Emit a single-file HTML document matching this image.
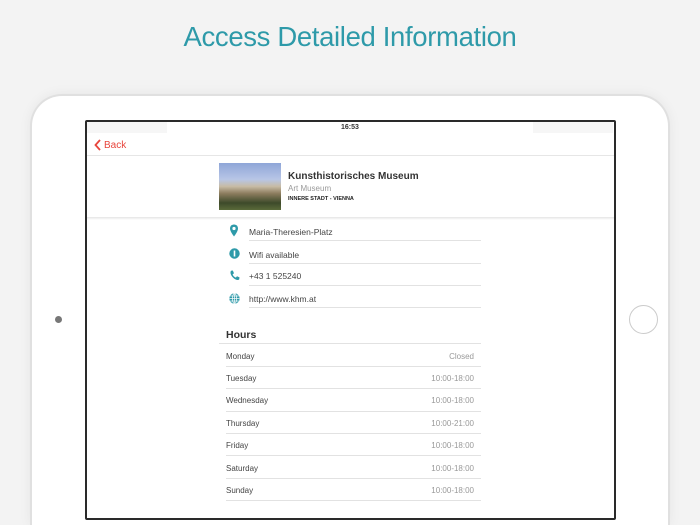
<!DOCTYPE html>
<html><head><meta charset="utf-8"><style>
*{margin:0;padding:0;box-sizing:border-box}
html{width:700px;height:525px;overflow:hidden}
body{width:700px;height:525px;overflow:hidden;background:#f3f3f3;font-family:"Liberation Sans",sans-serif;position:relative}
.title{position:absolute;top:21px;left:0;width:700px;text-align:center;font-size:27.5px;color:#2e9aa9;letter-spacing:-0.35px}
.dev{position:absolute;left:30px;top:94px;width:640px;height:431px;background:#fff;border:2px solid #e0e0e0;border-bottom:none;border-radius:32px 32px 0 0;box-shadow:0 0 12px rgba(0,0,0,0.06)}
.cam{position:absolute;left:55px;top:316px;width:7px;height:7px;border-radius:50%;background:#777}
.home{position:absolute;left:629px;top:305px;width:29px;height:29px;border-radius:50%;border:1.5px solid #ccc;background:#fff}
.scr{position:absolute;left:85px;top:120px;width:531px;height:400px;border:2.5px solid #2a2a2a;border-radius:2px;background:#fff;overflow:hidden}
.abs{position:absolute}
.t{position:absolute;font-size:8.5px;color:#444}
.line{position:absolute;height:1px;background:#e2e2e2}
.r{position:absolute;font-size:8px;color:#999;text-align:right;width:80px}
</style></head><body>
<div class="title">Access Detailed Information</div>
<div class="dev"></div>
<div class="cam"></div>
<div class="home"></div>
<div class="scr">
 <div class="abs" style="left:0;top:0;width:80px;height:11px;background:#f6f6f6"></div>
 <div class="abs" style="left:446px;top:0;width:80px;height:11px;background:#f6f6f6"></div>
 <div class="t" style="left:254px;top:2px;font-size:7px;font-weight:bold;color:#333">16:53</div>
 <svg class="abs" style="left:7px;top:17px" width="8" height="12" viewBox="0 0 8 12"><path d="M6 1 L1.5 6 L6 11" stroke="#e8453c" stroke-width="1.8" fill="none"/></svg>
 <div class="t" style="left:17px;top:18px;font-size:10px;color:#e8453c">Back</div>
 <div class="line" style="left:0;top:33px;width:531px;background:#e6e6e6"></div>
 <div class="abs" style="left:132px;top:41px;width:62px;height:47px;background:linear-gradient(180deg,#8fa6d8 0%,#b8c6e6 35%,#c7bba4 50%,#8c7c5e 65%,#3d4a2a 85%,#5a6a3a 100%)"></div>
 <div class="t" style="left:201px;top:49px;font-size:10px;font-weight:bold;color:#333">Kunsthistorisches Museum</div>
 <div class="t" style="left:201px;top:62px;font-size:8px;color:#999">Art Museum</div>
 <div class="t" style="left:201px;top:74px;font-size:5.5px;font-weight:bold;color:#222">INNERE STADT - VIENNA</div>
 <div class="abs" style="left:0;top:95px;width:531px;height:3px;background:linear-gradient(#e4e4e4,#fff)"></div>

 <svg class="abs" style="left:142px;top:102px" width="10" height="13" viewBox="0 0 10 13"><path d="M5 0.5C2.5 0.5 1 2.3 1 4.5 1 7.5 5 12.5 5 12.5S9 7.5 9 4.5C9 2.3 7.5 0.5 5 0.5Z" fill="#2e9aa9"/><circle cx="5" cy="4.5" r="1.6" fill="#fff"/></svg>
 <div class="t" style="left:162px;top:105px">Maria-Theresien-Platz</div>
 <div class="line" style="left:162px;top:118px;width:232px"></div>
 <svg class="abs" style="left:142px;top:126px" width="11" height="11" viewBox="0 0 11 11"><circle cx="5.5" cy="5.5" r="5.2" fill="#2e9aa9"/><rect x="4.7" y="2.5" width="1.6" height="6" fill="#fff"/></svg>
 <div class="t" style="left:162px;top:128px">Wifi available</div>
 <div class="line" style="left:162px;top:141px;width:232px"></div>
 <svg class="abs" style="left:142px;top:148px" width="11" height="11" viewBox="0 0 11 11"><path d="M2 0.8 L3.8 0.5 5 3.2 3.6 4.4C4.3 6 5.2 7 6.8 7.6L8 6.2 10.5 7.4 10.2 9.4C9 10.6 6.5 10 4.2 7.8 1.8 5.4 0.8 2.6 2 0.8Z" fill="#2e9aa9"/></svg>
 <div class="t" style="left:162px;top:149px">+43 1 525240</div>
 <div class="line" style="left:162px;top:163px;width:232px"></div>
 <svg class="abs" style="left:142px;top:171px" width="11" height="11" viewBox="0 0 11 11"><circle cx="5.5" cy="5.5" r="5.2" fill="#2e9aa9"/><g stroke="#fff" stroke-width="0.7" fill="none"><ellipse cx="5.5" cy="5.5" rx="2.2" ry="5"/><line x1="0.5" y1="5.5" x2="10.5" y2="5.5"/><line x1="1.2" y1="3" x2="9.8" y2="3"/><line x1="1.2" y1="8" x2="9.8" y2="8"/><line x1="5.5" y1="0.5" x2="5.5" y2="10.5"/></g></svg>
 <div class="t" style="left:162px;top:172px">http://www.khm.at</div>
 <div class="line" style="left:162px;top:185px;width:232px"></div>

 <div class="t" style="left:139px;top:207px;font-size:10.5px;font-weight:bold;color:#333">Hours</div>
 <div class="line" style="left:132px;top:221px;width:262px"></div>

 <div class="t" style="left:139px;top:230px;font-size:8px">Monday</div><div class="r" style="left:307px;top:230px">Closed</div>
 <div class="line" style="left:139px;top:244px;width:255px"></div>
 <div class="t" style="left:139px;top:252px;font-size:8px">Tuesday</div><div class="r" style="left:307px;top:252px">10:00-18:00</div>
 <div class="line" style="left:139px;top:266px;width:255px"></div>
 <div class="t" style="left:139px;top:274px;font-size:8px">Wednesday</div><div class="r" style="left:307px;top:274px">10:00-18:00</div>
 <div class="line" style="left:139px;top:289px;width:255px"></div>
 <div class="t" style="left:139px;top:297px;font-size:8px">Thursday</div><div class="r" style="left:307px;top:297px">10:00-21:00</div>
 <div class="line" style="left:139px;top:311px;width:255px"></div>
 <div class="t" style="left:139px;top:319px;font-size:8px">Friday</div><div class="r" style="left:307px;top:319px">10:00-18:00</div>
 <div class="line" style="left:139px;top:333px;width:255px"></div>
 <div class="t" style="left:139px;top:342px;font-size:8px">Saturday</div><div class="r" style="left:307px;top:342px">10:00-18:00</div>
 <div class="line" style="left:139px;top:356px;width:255px"></div>
 <div class="t" style="left:139px;top:364px;font-size:8px">Sunday</div><div class="r" style="left:307px;top:364px">10:00-18:00</div>
 <div class="line" style="left:139px;top:378px;width:255px"></div>
</div>
</body></html>
